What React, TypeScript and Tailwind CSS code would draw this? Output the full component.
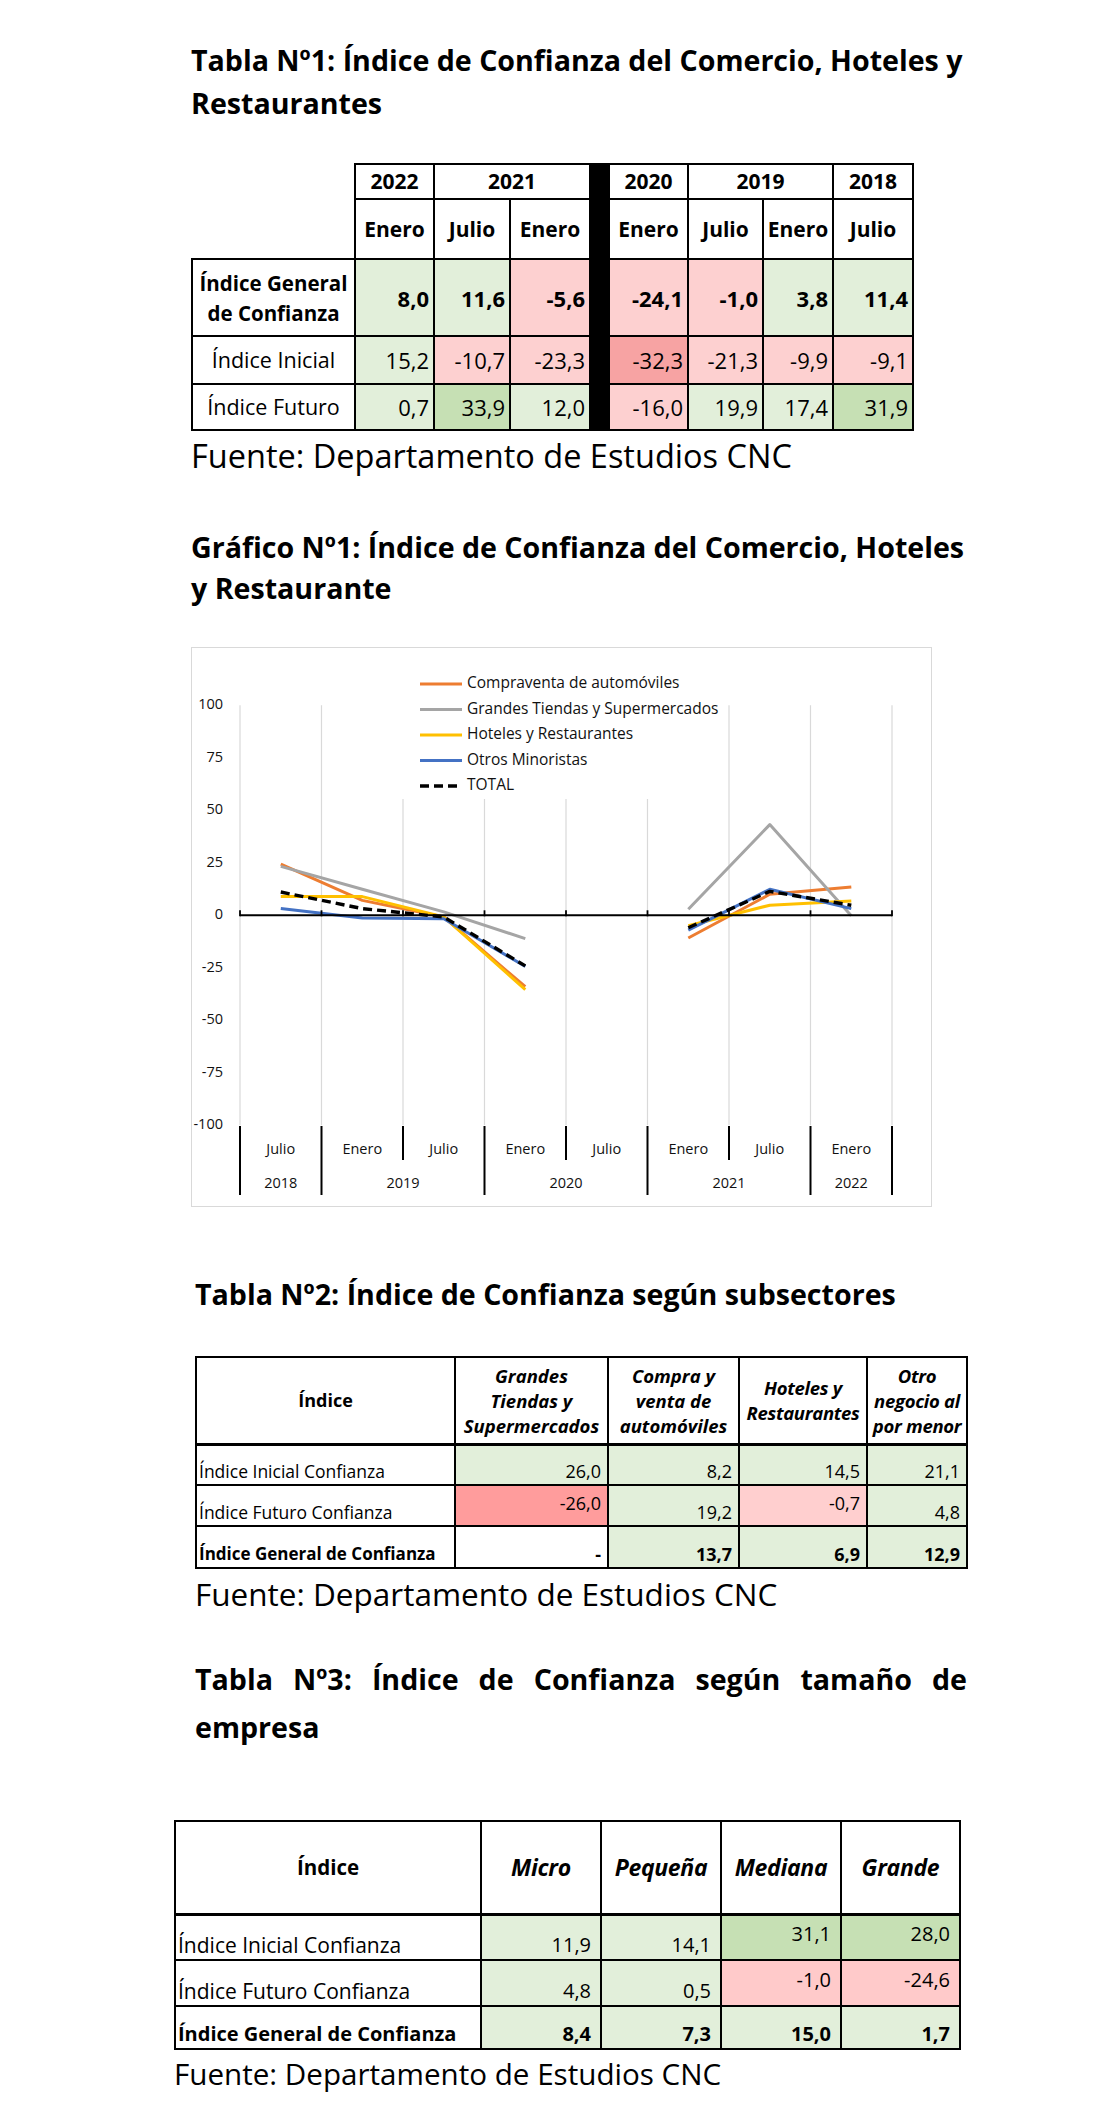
import React from "react";

const G = "bg-[#e2efda]";
const GG = "bg-[#c6e0b4]";
const P = "bg-[#fdd0d0]";
const R = "bg-[#f7a3a3]";
const W = "bg-white";

type Cell = { v: string; bg: string };

const t1Rows: { label: React.ReactNode; bold: boolean; h: string; cells: Cell[] }[] = [
  {
    label: (
      <>
        Índice General
        <br />
        de Confianza
      </>
    ),
    bold: true,
    h: "h-[77px]",
    cells: [
      { v: "8,0", bg: G },
      { v: "11,6", bg: G },
      { v: "-5,6", bg: P },
      { v: "-24,1", bg: P },
      { v: "-1,0", bg: P },
      { v: "3,8", bg: G },
      { v: "11,4", bg: G },
    ],
  },
  {
    label: "Índice Inicial",
    bold: false,
    h: "h-[48px]",
    cells: [
      { v: "15,2", bg: G },
      { v: "-10,7", bg: P },
      { v: "-23,3", bg: P },
      { v: "-32,3", bg: R },
      { v: "-21,3", bg: P },
      { v: "-9,9", bg: P },
      { v: "-9,1", bg: P },
    ],
  },
  {
    label: "Índice Futuro",
    bold: false,
    h: "h-[46px]",
    cells: [
      { v: "0,7", bg: G },
      { v: "33,9", bg: GG },
      { v: "12,0", bg: G },
      { v: "-16,0", bg: P },
      { v: "19,9", bg: G },
      { v: "17,4", bg: G },
      { v: "31,9", bg: GG },
    ],
  },
];

function Tabla1() {
  const th = "border-2 border-black text-center font-bold text-[21px] leading-none";
  const td = "border-2 border-black text-right pr-[4px] text-[22px] leading-none";
  return (
    <table className="border-collapse table-fixed w-[721px]">
      <colgroup>
        <col className="w-[163px]" />
        <col className="w-[79px]" />
        <col className="w-[76px]" />
        <col className="w-[80px]" />
        <col className="w-[19px]" />
        <col className="w-[79px]" />
        <col className="w-[75px]" />
        <col className="w-[70px]" />
        <col className="w-[80px]" />
      </colgroup>
      <tbody>
        <tr className="h-[35px]">
          <td rowSpan={2} className="border-0"></td>
          <td className={th}>2022</td>
          <td colSpan={2} className={th}>
            2021
          </td>
          <td rowSpan={5} className="bg-black border-2 border-black"></td>
          <td className={th}>2020</td>
          <td colSpan={2} className={th}>
            2019
          </td>
          <td className={th}>2018</td>
        </tr>
        <tr className="h-[60px]">
          {["Enero", "Julio", "Enero"].map((m, i) => (
            <td key={i} className={th}>
              {m}
            </td>
          ))}
          {["Enero", "Julio", "Enero", "Julio"].map((m, i) => (
            <td key={"b" + i} className={th}>
              {m}
            </td>
          ))}
        </tr>
        {t1Rows.map((r, ri) => (
          <tr key={ri} className={r.h}>
            <td
              className={`border-2 border-black text-center leading-[30px] ${
                r.bold ? "font-bold text-[20.5px]" : "text-[21.5px]"
              }`}
            >
              {r.label}
            </td>
            {r.cells.map((c, ci) => (
              <td key={ci} className={`${td} ${c.bg} ${r.bold ? "font-bold" : ""}`}>
                {c.v}
              </td>
            ))}
          </tr>
        ))}
      </tbody>
    </table>
  );
}

// ---- chart ----
const X0 = 48;
const CW = 81.5;
const Y0 = 267.3;
const K = 2.1;

const series = [
  { color: "#ed7d31", dash: "", data: [24.4, 7.1, -0.8, -34, null, -10.8, 10, 13.5] },
  { color: "#a5a5a5", dash: "", data: [23.3, 12.4, 1.6, -11.1, null, 2.9, 43.2, -0.2] },
  { color: "#ffc000", dash: "", data: [8.9, 8.9, -0.8, -35.4, null, -5, 4.8, 6.8] },
  { color: "#4472c4", dash: "", data: [3.2, -1.3, -1.6, -24.4, null, -7.1, 12.4, 3.2] },
  { color: "#000000", dash: "9 5", data: [11.1, 3.2, -0.8, -24.1, null, -5.9, 11.4, 4.8] },
];

const legend = [
  { color: "#ed7d31", dash: "", text: "Compraventa de automóviles" },
  { color: "#a5a5a5", dash: "", text: "Grandes Tiendas y Supermercados" },
  { color: "#ffc000", dash: "", text: "Hoteles y Restaurantes" },
  { color: "#4472c4", dash: "", text: "Otros Minoristas" },
  { color: "#000000", dash: "9 5", text: "TOTAL" },
];

function pathFor(data: (number | null)[]) {
  let d = "";
  let pen = false;
  data.forEach((v, i) => {
    if (v === null) {
      pen = false;
      return;
    }
    const x = X0 + (i + 0.5) * CW;
    const y = Y0 - v * K;
    d += `${pen ? "L" : "M"}${x.toFixed(1)} ${y.toFixed(1)} `;
    pen = true;
  });
  return d;
}

function Grafico() {
  const ticks = [100, 75, 50, 25, 0, -25, -50, -75, -100];
  const months = ["Julio", "Enero", "Julio", "Enero", "Julio", "Enero", "Julio", "Enero"];
  const years = [
    { t: "2018", x: X0 + 0.5 * CW },
    { t: "2019", x: X0 + 2 * CW },
    { t: "2020", x: X0 + 4 * CW },
    { t: "2021", x: X0 + 6 * CW },
    { t: "2022", x: X0 + 7.5 * CW },
  ];
  const font = "'Open Sans', sans-serif";
  return (
    <div className="w-[741px] h-[560px] border border-[#d9d9d9] bg-white">
      <svg width="739" height="558" viewBox="0 0 739 558">
        {/* gridlines */}
        {Array.from({ length: 9 }).map((_, i) => {
          const x = X0 + i * CW;
          const top = i >= 2 && i <= 5 ? 151 : Y0 - 100 * K;
          return <line key={i} x1={x} x2={x} y1={top} y2={Y0 + 100 * K} stroke="#d9d9d9" strokeWidth="1.2" />;
        })}
        {/* y labels */}
        {ticks.map((t) => (
          <text
            key={t}
            x={31}
            y={Y0 - t * K}
            textAnchor="end"
            dominantBaseline="middle"
            fontFamily={font}
            fontSize="14.5"
            fill="#111"
          >
            {t}
          </text>
        ))}
        {/* series */}
        {series.map((s, i) => (
          <path
            key={i}
            d={pathFor(s.data)}
            fill="none"
            stroke={s.color}
            strokeWidth={s.dash ? 3.4 : 3}
            strokeDasharray={s.dash || undefined}
            strokeLinejoin="round"
          />
        ))}
        {/* x axis at 0 */}
        <line x1={X0} x2={X0 + 8 * CW} y1={Y0} y2={Y0} stroke="#000" strokeWidth="2" />
        {Array.from({ length: 9 }).map((_, i) => {
          const x = X0 + i * CW;
          return <line key={i} x1={x} x2={x} y1={Y0 - 5} y2={Y0 + 1} stroke="#000" strokeWidth="1.8" />;
        })}
        {/* category axis */}
        {Array.from({ length: 9 }).map((_, i) => {
          const x = X0 + i * CW;
          const short = i === 2 || i === 4 || i === 6;
          return (
            <line key={i} x1={x} x2={x} y1={478} y2={short ? 512 : 547} stroke="#000" strokeWidth="2" />
          );
        })}
        {months.map((m, i) => (
          <text
            key={i}
            x={X0 + (i + 0.5) * CW}
            y={502}
            textAnchor="middle"
            dominantBaseline="middle"
            fontFamily={font}
            fontSize="14.5"
            fill="#111"
          >
            {m}
          </text>
        ))}
        {years.map((y) => (
          <text
            key={y.t}
            x={y.x}
            y={536}
            textAnchor="middle"
            dominantBaseline="middle"
            fontFamily={font}
            fontSize="14.5"
            fill="#111"
          >
            {y.t}
          </text>
        ))}
        {/* legend */}
        {legend.map((l, i) => {
          const y = 36 + i * 25.5;
          return (
            <g key={i}>
              <line
                x1={228}
                x2={270}
                y1={y}
                y2={y}
                stroke={l.color}
                strokeWidth={l.dash ? 3.4 : 3}
                strokeDasharray={l.dash || undefined}
              />
              <text
                x={275}
                y={y}
                dominantBaseline="middle"
                fontFamily={font}
                fontSize="15.5"
                fill="#111"
              >
                {l.text}
              </text>
            </g>
          );
        })}
      </svg>
    </div>
  );
}

// ---- tabla 2 ----
type Row = {
  label: string;
  bold: boolean;
  h: string;
  cells: { v: string; bg: string; mid?: boolean }[];
};

const t2Rows: Row[] = [
  {
    label: "Índice Inicial Confianza",
    bold: false,
    h: "h-[41px]",
    cells: [
      { v: "26,0", bg: G },
      { v: "8,2", bg: G },
      { v: "14,5", bg: G },
      { v: "21,1", bg: G },
    ],
  },
  {
    label: "Índice Futuro Confianza",
    bold: false,
    h: "h-[41px]",
    cells: [
      { v: "-26,0", bg: "bg-[#ff9c9c]", mid: true },
      { v: "19,2", bg: G },
      { v: "-0,7", bg: "bg-[#ffcfcf]", mid: true },
      { v: "4,8", bg: G },
    ],
  },
  {
    label: "Índice General de Confianza",
    bold: true,
    h: "h-[42px]",
    cells: [
      { v: "-", bg: W },
      { v: "13,7", bg: G },
      { v: "6,9", bg: G },
      { v: "12,9", bg: G },
    ],
  },
];

function Tabla2() {
  const hd = "border-2 border-black border-b-[3px] text-center font-bold italic text-[18.5px] leading-[25px] px-0";
  return (
    <table className="border-collapse table-fixed w-[771px]">
      <colgroup>
        <col className="w-[259px]" />
        <col className="w-[153px]" />
        <col className="w-[131px]" />
        <col className="w-[128px]" />
        <col className="w-[100px]" />
      </colgroup>
      <tbody>
        <tr className="h-[87px]">
          <td className="border-2 border-black border-b-[3px] text-center font-bold text-[18px]">Índice</td>
          <td className={hd}>
            Grandes
            <br />
            Tiendas y
            <br />
            Supermercados
          </td>
          <td className={hd}>
            Compra y
            <br />
            venta de
            <br />
            automóviles
          </td>
          <td className={`${hd} tracking-[-0.3px]`}>
            Hoteles y
            <br />
            Restaurantes
          </td>
          <td className={`${hd} tracking-[-0.3px]`}>
            Otro
            <br />
            negocio al
            <br />
            por menor
          </td>
        </tr>
        {t2Rows.map((r, ri) => (
          <tr key={ri} className={r.h}>
            <td
              className={`border-2 border-black align-bottom text-left pl-[2px] pb-[2px] leading-[22px] ${
                r.bold ? "font-bold text-[17px]" : "text-[17.5px]"
              }`}
            >
              {r.label}
            </td>
            {r.cells.map((c, ci) => (
              <td
                key={ci}
                className={`border-2 border-black text-right pr-[6px] text-[18px] leading-[22px] ${c.bg} ${
                  c.mid ? "align-middle pb-[6px]" : "align-bottom pb-[2px]"
                } ${r.bold ? "font-bold" : ""}`}
              >
                {c.v}
              </td>
            ))}
          </tr>
        ))}
      </tbody>
    </table>
  );
}

// ---- tabla 3 ----
const t3Rows: Row[] = [
  {
    label: "Índice Inicial Confianza",
    bold: false,
    h: "h-[46px]",
    cells: [
      { v: "11,9", bg: G },
      { v: "14,1", bg: G },
      { v: "31,1", bg: GG, mid: true },
      { v: "28,0", bg: GG, mid: true },
    ],
  },
  {
    label: "Índice Futuro Confianza",
    bold: false,
    h: "h-[46px]",
    cells: [
      { v: "4,8", bg: G },
      { v: "0,5", bg: G },
      { v: "-1,0", bg: "bg-[#ffcaca]", mid: true },
      { v: "-24,6", bg: "bg-[#ffcaca]", mid: true },
    ],
  },
  {
    label: "Índice General de Confianza",
    bold: true,
    h: "h-[43px]",
    cells: [
      { v: "8,4", bg: G },
      { v: "7,3", bg: G },
      { v: "15,0", bg: G },
      { v: "1,7", bg: G },
    ],
  },
];

function Tabla3() {
  const hd = "border-2 border-black border-b-[3px] text-center font-bold italic text-[23px] tracking-[-0.3px]";
  return (
    <table className="border-collapse table-fixed w-[785px]">
      <colgroup>
        <col className="w-[306px]" />
        <col className="w-[120px]" />
        <col className="w-[120px]" />
        <col className="w-[120px]" />
        <col className="w-[119px]" />
      </colgroup>
      <tbody>
        <tr className="h-[93px]">
          <td className="border-2 border-black border-b-[3px] text-center font-bold text-[20.5px]">Índice</td>
          <td className={hd}>Micro</td>
          <td className={hd}>Pequeña</td>
          <td className={hd}>Mediana</td>
          <td className={hd}>Grande</td>
        </tr>
        {t3Rows.map((r, ri) => (
          <tr key={ri} className={r.h}>
            <td
              className={`border-2 border-black align-bottom text-left pl-[2px] pb-[2px] leading-[24px] ${
                r.bold ? "font-bold text-[20px]" : "text-[21px]"
              }`}
            >
              {r.label}
            </td>
            {r.cells.map((c, ci) => (
              <td
                key={ci}
                className={`border-2 border-black text-right pr-[9px] text-[20px] leading-[24px] ${c.bg} ${
                  c.mid ? "align-middle pb-[6px]" : "align-bottom pb-[2px]"
                } ${r.bold ? "font-bold" : ""}`}
              >
                {c.v}
              </td>
            ))}
          </tr>
        ))}
      </tbody>
    </table>
  );
}

export default function App() {
  const title = "font-bold text-[28.6px] text-black";
  const t3words = ["Tabla", "Nº3:", "Índice", "de", "Confianza", "según", "tamaño", "de"];
  return (
    <div className="w-[1100px] min-h-[2107px] bg-white font-['Open_Sans',sans-serif] text-black">
      {/* Tabla 1 */}
      <div className="ml-[191px] pt-[38px]">
        <h2 className={`${title} leading-[43px]`}>
          Tabla Nº1: Índice de Confianza del Comercio, Hoteles y
          <br />
          Restaurantes
        </h2>
        <div className="mt-[39px]">
          <Tabla1 />
        </div>
        <p className="text-[32.5px] leading-[36px] mt-[7px]">Fuente: Departamento de Estudios CNC</p>

        {/* Grafico */}
        <h2 className={`${title} leading-[41px] mt-[52px]`}>
          Gráfico Nº1: Índice de Confianza del Comercio, Hoteles
          <br />
          y Restaurante
        </h2>
        <div className="mt-[39px]">
          <Grafico />
        </div>
      </div>

      {/* Tabla 2 */}
      <div className="ml-[195px] mt-[65px]">
        <h2 className={`${title} leading-[43px]`}>Tabla Nº2: Índice de Confianza según subsectores</h2>
        <div className="mt-[41px]">
          <Tabla2 />
        </div>
        <p className="text-[31.5px] leading-[36px] mt-[7px]">Fuente: Departamento de Estudios CNC</p>

        <h2 className={`${title} leading-[48px] mt-[43px] w-[772px]`}>
          <span className="flex justify-between">
            {t3words.map((w, i) => (
              <span key={i}>{w}</span>
            ))}
          </span>
          <span className="block">empresa</span>
        </h2>
      </div>

      {/* Tabla 3 */}
      <div className="ml-[174px] mt-[69px]">
        <Tabla3 />
        <p className="text-[29.6px] leading-[36px] mt-[6px]">Fuente: Departamento de Estudios CNC</p>
      </div>
    </div>
  );
}
